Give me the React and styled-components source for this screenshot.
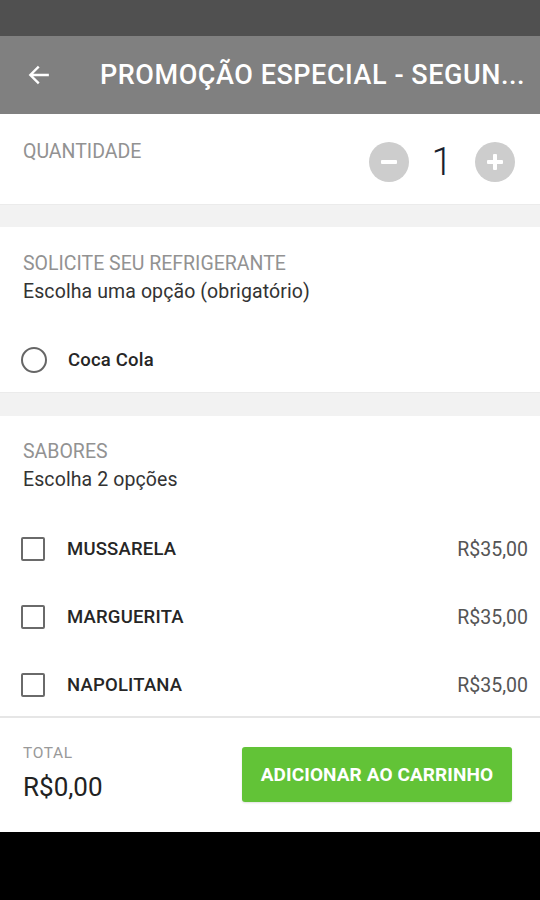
import React from "react";
import styled, { createGlobalStyle } from "styled-components";

const Global = createGlobalStyle`
  html, body { margin: 0; padding: 0; background: #000; }
  body { font-family: Roboto, "Noto Sans", "Liberation Sans", sans-serif; }
  * { box-sizing: border-box; }
`;

const Screen = styled.div`
  width: 540px;
  height: 900px;
  display: flex;
  flex-direction: column;
  background: #000;
`;

const StatusBar = styled.div`
  height: 36px;
  background: #505050;
  flex: none;
`;

const Toolbar = styled.div`
  height: 78px;
  background: #808080;
  display: flex;
  align-items: center;
  padding: 0 0 0 26px;
  gap: 48px;
  flex: none;
`;

const Title = styled.h1`
  margin: 0;
  color: #fff;
  font-size: 27px;
  font-weight: 500;
  white-space: nowrap;
  flex: 1;
  letter-spacing: 0.55px;
`;

const Content = styled.div`
  background: #fff;
  display: flex;
  flex-direction: column;
  height: 602px;
  overflow: hidden;
  flex: none;
`;

const QtySection = styled.div`
  height: 90px;
  flex: none;
  display: flex;
  justify-content: space-between;
  align-items: flex-start;
  padding: 28px 25px 0 23px;
`;

const Label = styled.div`
  color: #929292;
  font-size: 19.5px;
  line-height: 20px;
`;

const Stepper = styled.div`
  display: flex;
  align-items: center;
`;

const RoundBtn = styled.div`
  width: 40px;
  height: 40px;
  border-radius: 50%;
  background: #cdcdcd;
  display: flex;
  align-items: center;
  justify-content: center;
`;

const Qty = styled.div`
  width: 66px;
  text-align: center;
  font-size: 38px;
  font-weight: 300;
  color: #18202e;
  line-height: 40px;
`;

const Separator = styled.div`
  height: ${(p) => p.$h}px;
  flex: none;
  background: #f2f2f2;
  border-top: 1px solid #ebebeb;
`;

const Group = styled.div`
  padding-top: ${(p) => p.$top}px;
  display: flex;
  flex-direction: column;
  flex: none;
`;

const Header = styled.div`
  padding-left: 23px;
  display: flex;
  flex-direction: column;
  gap: 8px;
`;

const Sub = styled.div`
  color: #333;
  font-size: 19.5px;
  line-height: 20px;
  letter-spacing: 0.1px;
`;

const OptionList = styled.div`
  margin-top: ${(p) => p.$top}px;
  display: flex;
  flex-direction: column;
`;

const OptionRow = styled.div`
  height: ${(p) => p.$h || 68}px;
  display: flex;
  align-items: center;
  padding: 0 12px 0 21px;
`;

const Radio = styled.div`
  width: 26px;
  height: 26px;
  border-radius: 50%;
  border: 2px solid #666;
  flex: none;
`;

const Box = styled.div`
  width: 24px;
  height: 24px;
  border-radius: 2px;
  border: 2px solid #6a6a6a;
  flex: none;
`;

const OptName = styled.div`
  margin-left: ${(p) => p.$ml}px;
  color: #262626;
  font-size: 18.5px;
  font-weight: 500;
  letter-spacing: 0.2px;
  flex: 1;
`;

const Price = styled.div`
  color: #555;
  font-size: 19.5px;
`;

const Footer = styled.div`
  background: #fff;
  border-top: 2px solid #e6e6e6;
  height: 116px;
  flex: none;
  display: flex;
  justify-content: space-between;
  align-items: flex-start;
  padding: 26px 28px 0 23px;
`;

const TotalCol = styled.div`
  display: flex;
  flex-direction: column;
  gap: 10px;
`;

const TotalLabel = styled.div`
  color: #999;
  font-size: 15.5px;
  line-height: 18px;
  letter-spacing: 0.6px;
`;

const TotalValue = styled.div`
  color: #222;
  font-size: 26px;
  line-height: 30px;
`;

const AddBtn = styled.button`
  width: 270px;
  height: 55px;
  margin-top: 3px;
  border: none;
  border-radius: 3px;
  background: #62c337;
  color: #fff;
  font-family: inherit;
  font-size: 19px;
  font-weight: 700;
  letter-spacing: 0.1px;
  box-shadow: 0 1px 2px rgba(0,0,0,0.12);
`;

const flavors = ["MUSSARELA", "MARGUERITA", "NAPOLITANA"];

export default function App() {
  return (
    <Screen>
      <Global />
      <StatusBar />
      <Toolbar>
        <svg width="26" height="26" viewBox="0 0 24 24" fill="none">
          <path d="M20 12H4.5M11 5l-7 7 7 7" stroke="#fff" strokeWidth="2.2" strokeLinecap="square" />
        </svg>
        <Title>PROMOÇÃO ESPECIAL - SEGUN...</Title>
      </Toolbar>
      <Content>
        <QtySection>
          <Label>QUANTIDADE</Label>
          <Stepper>
            <RoundBtn>
              <svg width="22" height="22" viewBox="0 0 22 22">
                <rect x="3" y="9" width="16" height="4" rx="1" fill="#fff" />
              </svg>
            </RoundBtn>
            <Qty>1</Qty>
            <RoundBtn>
              <svg width="22" height="22" viewBox="0 0 22 22">
                <rect x="3" y="9" width="16" height="4" rx="1" fill="#fff" />
                <rect x="9" y="3" width="4" height="16" rx="1" fill="#fff" />
              </svg>
            </RoundBtn>
          </Stepper>
        </QtySection>
        <Separator $h={23} />
        <Group $top={27}>
          <Header>
            <Label>SOLICITE SEU REFRIGERANTE</Label>
            <Sub>Escolha uma opção (obrigatório)</Sub>
          </Header>
          <OptionList $top={26}>
            <OptionRow $h={64}>
              <Radio />
              <OptName $ml={21}>Coca Cola</OptName>
            </OptionRow>
          </OptionList>
        </Group>
        <Separator $h={24} />
        <Group $top={26}>
          <Header>
            <Label>SABORES</Label>
            <Sub>Escolha 2 opções</Sub>
          </Header>
          <OptionList $top={25}>
            {flavors.map((f) => (
              <OptionRow key={f}>
                <Box />
                <OptName $ml={22}>{f}</OptName>
                <Price>R$35,00</Price>
              </OptionRow>
            ))}
          </OptionList>
        </Group>
      </Content>
      <Footer>
        <TotalCol>
          <TotalLabel>TOTAL</TotalLabel>
          <TotalValue>R$0,00</TotalValue>
        </TotalCol>
        <AddBtn>ADICIONAR AO CARRINHO</AddBtn>
      </Footer>
    </Screen>
  );
}
